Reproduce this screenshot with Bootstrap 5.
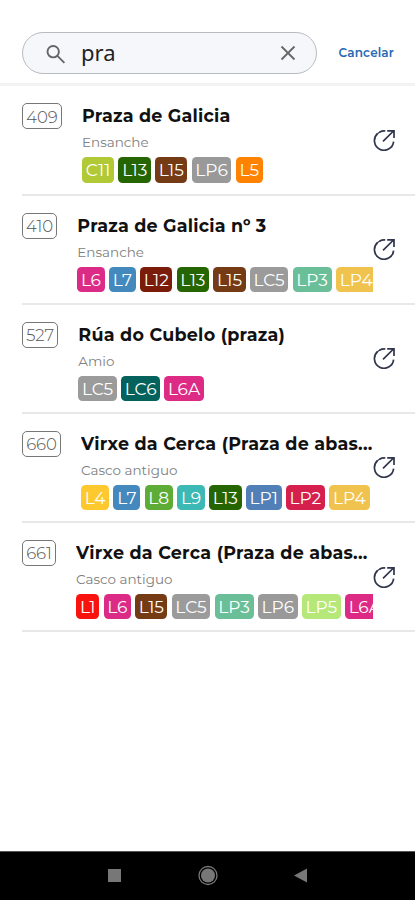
<!DOCTYPE html>
<html lang="gl">
<head>
<meta charset="utf-8">
<meta name="viewport" content="width=device-width, initial-scale=1">
<title>Buscar parada</title>
<link href="https://cdn.jsdelivr.net/npm/bootstrap@5.3.0/dist/css/bootstrap.min.css" rel="stylesheet">
<style>
body{font-family:Montserrat,Inter,"Liberation Sans",sans-serif;height:900px;overflow:hidden;background:#fff;color:#111}
.topbar{height:86.4px;padding:32px 21px 9.4px 22px;border-bottom:3px solid #f3f3f4}
.searchbox{width:295px;height:42px;border:1px solid #b9bcbf;background:#f5f7fb;padding:0 20px 0 23px}
.query{font:22px/1 "Noto Sans",sans-serif;margin-left:15px;padding-bottom:2px;color:#222}
.cancel{font-size:12px;font-weight:600;color:#2768b5;letter-spacing:.15px}
.stop{height:109.15px;padding:17px 20px 0 0;margin-left:22px;border-bottom:2px solid #e8e8e9}
.code{height:26px;border:1px solid #777;border-radius:5px;font-size:16.5px;font-weight:350;color:#555;margin-right:20px;padding-top:1px}
.c409{width:40px}.c410{width:35.3px}.c527{width:36.3px}.c660{width:39px}.c661{width:34px}
.name{font-size:17.5px;line-height:26px;font-weight:700;color:#111}
.t1{letter-spacing:.23px}.t2{letter-spacing:.23px}.t3{letter-spacing:.28px}.t4{letter-spacing:.27px}
.zone{font-size:13.5px;line-height:18px;color:#808080;font-weight:400;margin-top:4px;letter-spacing:0}
.lines{gap:4.3px;margin-top:6px}
.line{height:25.5px;border-radius:4.5px;color:#fff;font-size:17px;line-height:26px;text-align:center;flex:none}
.C11{width:32.2px;background:#b0c934}.L1{width:23.3px;background:#f8130f}.L4{width:28.2px;background:#fec82f}
.L5{width:27.2px;background:#ff8300}.L6{width:27.4px;background:#dc2b86}.L7{width:26.8px;background:#4389be}
.L8{width:28.3px;background:#5cac35}.L9{width:27.7px;background:#3cb8b5}.L12{width:32.3px;background:#7b1c0b}
.L13{width:32.4px;background:#266602}.L15{width:32.2px;background:#743b15}.LC5{width:38.5px;background:#9b9b9b}
.LC6{width:39px;background:#03635c}.LP1{width:35.8px;background:#5080b7}.LP2{width:38.9px;background:#d5204e}
.LP3{width:39px;background:#6abf98}.LP4{width:40.5px;background:#f0c34e}.LP5{width:38.8px;background:#b5e878}
.LP6{width:39.8px;background:#999}.L6A{width:39.5px;background:#dd2a85}
.open{margin-top:25.6px;flex:none}
.sysnav{height:49px;background:#000;border-top:1px solid #555}
.sysnav svg{display:block}
</style>
<script src="https://cdn.jsdelivr.net/npm/bootstrap@5.3.0/dist/js/bootstrap.bundle.min.js"></script>
</head>
<body class="d-flex flex-column m-0">
<svg class="d-none">
  <symbol id="go" viewBox="0 0 22 22"><path d="M12.3 2A9.6 9.6 0 0 0 6.5 3.2M4.6 4.5A9.6 9.6 0 1 0 20.6 12.6M10 12.3 20.5 2M14.2 1.9h6.8v7" fill="none" stroke="#30354d" stroke-width="1.7"/><path d="M7 3 4.3 4.8" stroke="#30354d" stroke-width="1.2"/></symbol>
</svg>
<header class="topbar d-flex align-items-center justify-content-between">
  <div class="searchbox rounded-pill d-flex align-items-center">
    <svg class="mt-1" width="20" height="20" viewBox="0 0 20 20" fill="none" stroke="#666" stroke-width="1.9"><circle cx="7.2" cy="6.7" r="5.7"/><path d="m11.4 10.9 7 7"/></svg>
    <span class="query">pra</span>
    <svg class="ms-auto" width="16" height="16" viewBox="0 0 16 16" fill="none" stroke="#666" stroke-width="1.8"><path d="m1.5 1.5 13 13m0-13-13 13"/></svg>
  </div>
  <a class="cancel text-decoration-none" href="#">Cancelar</a>
</header>
<main class="flex-grow-1">
  <article class="stop d-flex">
    <span class="code c409 d-flex align-items-center justify-content-center flex-shrink-0">409</span>
    <div class="flex-grow-1 overflow-hidden">
      <div class="name t1 text-nowrap">Praza de Galicia</div><div class="zone">Ensanche</div>
      <div class="lines d-flex"><span class="line C11">C11</span><span class="line L13">L13</span><span class="line L15">L15</span><span class="line LP6">LP6</span><span class="line L5">L5</span></div>
    </div>
    <svg class="open" width="22" height="22"><use href="#go"/></svg>
  </article>
  <article class="stop d-flex">
    <span class="code c410 d-flex align-items-center justify-content-center flex-shrink-0">410</span>
    <div class="flex-grow-1 overflow-hidden">
      <div class="name t2 text-nowrap">Praza de Galicia nº 3</div><div class="zone">Ensanche</div>
      <div class="lines d-flex"><span class="line L6">L6</span><span class="line L7">L7</span><span class="line L12">L12</span><span class="line L13">L13</span><span class="line L15">L15</span><span class="line LC5">LC5</span><span class="line LP3">LP3</span><span class="line LP4">LP4</span></div>
    </div>
    <svg class="open" width="22" height="22"><use href="#go"/></svg>
  </article>
  <article class="stop d-flex">
    <span class="code c527 d-flex align-items-center justify-content-center flex-shrink-0">527</span>
    <div class="flex-grow-1 overflow-hidden">
      <div class="name t3 text-nowrap">Rúa do Cubelo (praza)</div><div class="zone">Amio</div>
      <div class="lines d-flex"><span class="line LC5">LC5</span><span class="line LC6">LC6</span><span class="line L6A">L6A</span></div>
    </div>
    <svg class="open" width="22" height="22"><use href="#go"/></svg>
  </article>
  <article class="stop d-flex">
    <span class="code c660 d-flex align-items-center justify-content-center flex-shrink-0">660</span>
    <div class="flex-grow-1 overflow-hidden">
      <div class="name t4 text-nowrap">Virxe da Cerca (Praza de abas...</div><div class="zone">Casco antiguo</div>
      <div class="lines d-flex"><span class="line L4">L4</span><span class="line L7">L7</span><span class="line L8">L8</span><span class="line L9">L9</span><span class="line L13">L13</span><span class="line LP1">LP1</span><span class="line LP2">LP2</span><span class="line LP4">LP4</span></div>
    </div>
    <svg class="open" width="22" height="22"><use href="#go"/></svg>
  </article>
  <article class="stop d-flex">
    <span class="code c661 d-flex align-items-center justify-content-center flex-shrink-0">661</span>
    <div class="flex-grow-1 overflow-hidden">
      <div class="name t4 text-nowrap">Virxe da Cerca (Praza de abas...</div><div class="zone">Casco antiguo</div>
      <div class="lines d-flex"><span class="line L1">L1</span><span class="line L6">L6</span><span class="line L15">L15</span><span class="line LC5">LC5</span><span class="line LP3">LP3</span><span class="line LP6">LP6</span><span class="line LP5">LP5</span><span class="line L6A">L6A</span></div>
    </div>
    <svg class="open" width="22" height="22"><use href="#go"/></svg>
  </article>
</main>
<footer class="sysnav d-flex align-items-center justify-content-center flex-shrink-0">
  <svg width="201" height="22" viewBox="0 0 201 22" fill="#777"><path d="M1 4h13v13H1zM187 10.5 200 3.5v14z"/><circle cx="101" cy="10.5" r="7"/><circle cx="101" cy="10.5" r="9" fill="none" stroke="#777" stroke-width="1.3"/></svg>
</footer>
</body>
</html>
